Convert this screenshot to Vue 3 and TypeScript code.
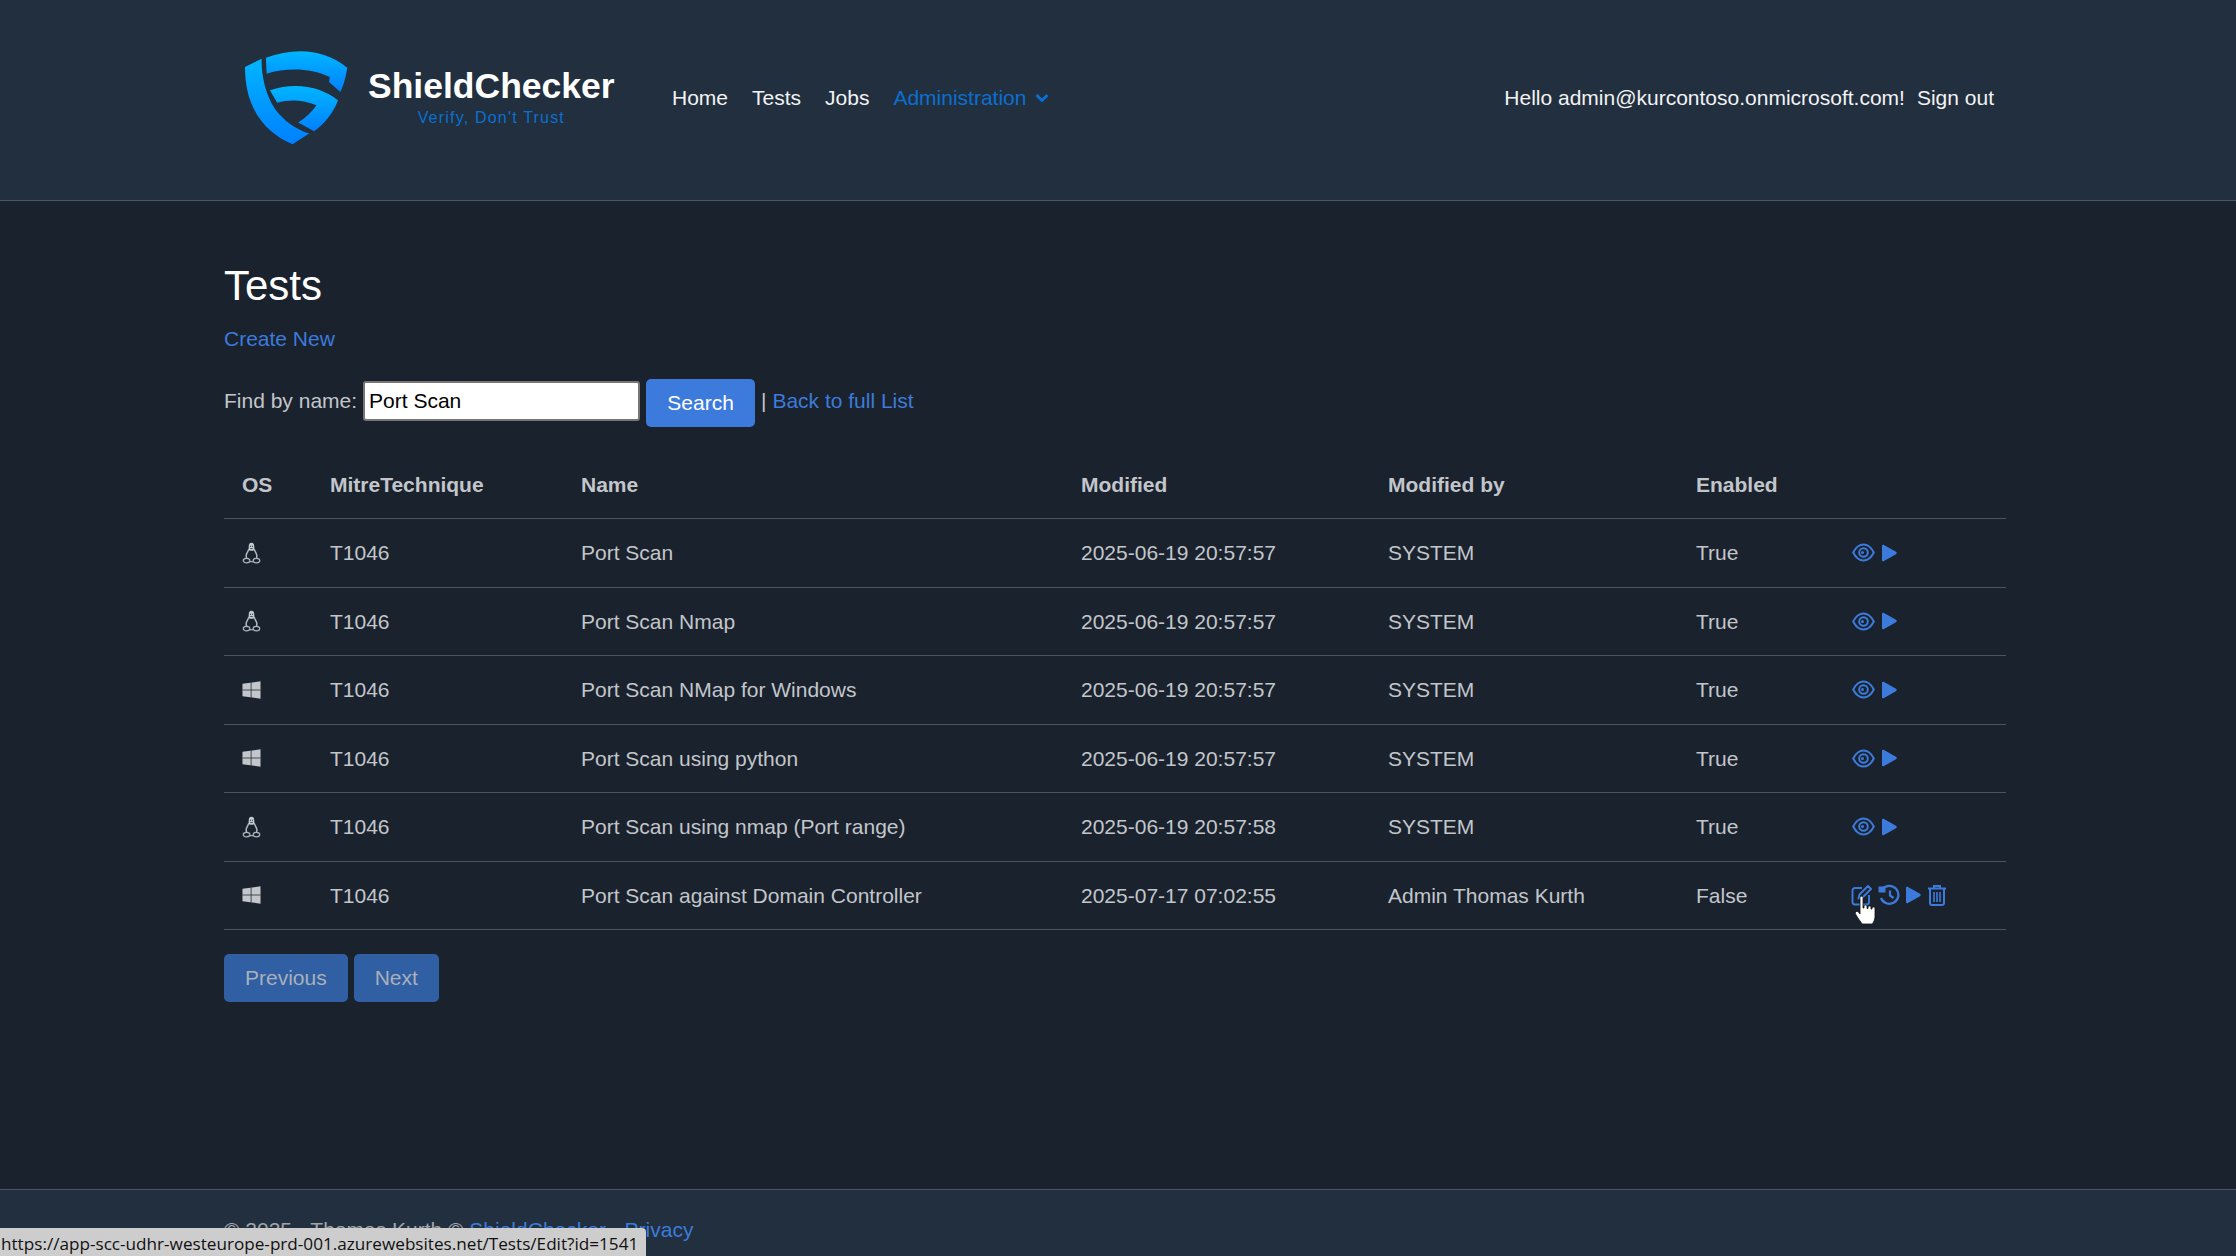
<template>
    <div class="page">
        <header class="topbar">
            <div class="topbar__inner">
                <a class="brand">
                    <svg class="brand__mark" viewBox="60 50 340 300" aria-hidden="true">
                        <defs>
                            <linearGradient id="shieldFill" x1="0" y1="0" x2="0" y2="1">
                                <stop offset="0" stop-color="#00b6ff" />
                                <stop offset="1" stop-color="#0080ff" />
                            </linearGradient>
                        </defs>
                        <g fill="url(#shieldFill)">
                            <path d="M75 110 L125 85 C124 130 135 190 165 235 C190 270 225 295 268 310 L218 342 C140 310 75 240 75 110Z" />
                            <path d="M138 82 C220 52 310 52 383 112 C378 140 372 165 362 185 L328 155 L330 140 C270 112 200 112 140 130Z" />
                            <path d="M150 180 C220 155 300 165 355 210 C340 250 315 280 283 303 L235 277 C258 262 277 245 290 225 C250 207 210 207 172 217Z" />
                        </g>
                    </svg>
                    <span class="brand__text">
                        <span class="brand__name">ShieldChecker</span>
                        <span class="brand__tag">Verify, Don't Trust</span>
                    </span>
                </a>
                <nav class="nav">
                    <a class="nav__link">Home</a>
                    <a class="nav__link">Tests</a>
                    <a class="nav__link">Jobs</a>
                    <a class="nav__link nav__link--active">
                        Administration
                        <svg class="nav__caret" viewBox="0 0 14 10" aria-hidden="true">
                            <path d="M1.500 2 L7 7.500 L12.500 2" fill="none" stroke="currentColor" stroke-width="3" />
                        </svg>
                    </a>
                </nav>
                <div class="nav nav--right">
                    <a class="nav__link nav__link--hello">Hello admin@kurcontoso.onmicrosoft.com!</a>
                    <a class="nav__link">Sign out</a>
                </div>
            </div>
        </header>

        <main class="content">
            <h1 class="title">Tests</h1>
            <p class="create"><a class="link">Create New</a></p>
            <form class="search" @submit.prevent>
                <span class="search__label search__label--find">Find by name:</span>
                <input class="search__input" value="Port Scan" />
                <button class="search__btn">Search</button>
                <span class="search__label">| <a class="link">Back to full List</a></span>
            </form>

            <table class="grid">
                <colgroup>
                    <col v-for="(w, i) in colWidths" :key="i" :style="{ width: w + 'px' }" />
                </colgroup>
                <thead>
                    <tr>
                        <th>OS</th>
                        <th>MitreTechnique</th>
                        <th>Name</th>
                        <th>Modified</th>
                        <th>Modified by</th>
                        <th>Enabled</th>
                        <th></th>
                    </tr>
                </thead>
                <tbody>
                    <tr v-for="row in rows" :key="row.name">
                        <td>
                            <svg v-if="row.os === 'linux'" class="os" viewBox="0 0 20 24" aria-hidden="true">
                                <g fill="none" stroke="#aeb6bd">
                                    <ellipse cx="4.600" cy="20.300" rx="3.600" ry="2.500" stroke-width="1.300" />
                                    <ellipse cx="15.400" cy="20.300" rx="3.600" ry="2.500" stroke-width="1.300" />
                                    <path d="M7 8 C6.400 10.500 4.400 12 4.200 14.500 C4.100 15.800 4.300 17 4.800 18" stroke-width="1.700" />
                                    <path d="M13 8 C13.600 10.500 15.600 12 15.800 14.500 C15.900 15.800 15.700 17 15.200 18" stroke-width="1.700" />
                                    <path d="M8 21.500 H12" stroke-width="1.300" />
                                </g>
                                <path d="M10 .8 C7.800 .8 7 2.600 7 5 C7 6.500 6.800 7.500 6.600 8.400 C8 10 12 10 13.400 8.400 C13.200 7.500 13 6.500 13 5 C13 2.600 12.200 .8 10 .8Z" fill="#c5cbd1" />
                                <path d="M8.400 4 h1.100 v1.300 h-1.100z M10.500 4 h1.100 v1.300 h-1.100z M8.700 6.800 h2.600 v.9 h-2.600z" fill="#1a222d" />
                            </svg>
                            <svg v-else class="os" viewBox="0 0 20 20" aria-hidden="true">
                                <path d="M.5 3.500 L19.500 .8 V19.200 L.5 16.500Z" fill="#c3c7cc" />
                                <path d="M9.600 2 V18 M.5 10 H19.500" fill="none" stroke="#1a222d" stroke-width=".8" />
                            </svg>
                        </td>
                        <td>{{ row.technique }}</td>
                        <td>{{ row.name }}</td>
                        <td>{{ row.modified }}</td>
                        <td>{{ row.by }}</td>
                        <td>{{ row.enabled }}</td>
                        <td>
                            <div class="actions" :class="{ 'actions--full': row.editable }">
                                <template v-if="row.editable">
                                    <svg class="ico ico--edit" viewBox="0 0 22 22" aria-hidden="true">
                                        <path d="M11 4 H4 a2.500 2.500 0 0 0 -2.500 2.500 V18 A2.500 2.500 0 0 0 4 20.500 H15.500 A2.500 2.500 0 0 0 18 18 V11" fill="none" stroke="currentColor" stroke-width="1.900" />
                                        <path d="M7.500 14.500 L8.500 10.500 L17 2 L20 5 L11.500 13.500Z" fill="none" stroke="currentColor" stroke-width="1.900" stroke-linejoin="round" />
                                    </svg>
                                    <svg class="ico ico--history" viewBox="0 0 22 22" aria-hidden="true">
                                        <path d="M4.500 5 A9 9 0 1 1 3 14" fill="none" stroke="currentColor" stroke-width="2.200" />
                                        <path d="M0.500 2.500 L7.500 2.500 L7.500 8.500 L0.500 8.500Z" fill="currentColor" />
                                        <path d="M12 6.500 V11.500 L15.500 14" fill="none" stroke="currentColor" stroke-width="2.200" />
                                    </svg>
                                </template>
                                <svg v-else class="ico ico--eye" viewBox="0 0 23 19" aria-hidden="true">
                                    <path d="M1.200 9.500 C4 4 8 1.500 11.500 1.500 C15 1.500 19 4 21.800 9.500 C19 15 15 17.500 11.500 17.500 C8 17.500 4 15 1.200 9.500Z" fill="none" stroke="currentColor" stroke-width="2" />
                                    <circle cx="11.500" cy="9.500" r="4.300" fill="none" stroke="currentColor" stroke-width="2" />
                                    <circle cx="10.500" cy="9.500" r="1.500" fill="currentColor" />
                                </svg>
                                <svg class="ico ico--play" viewBox="0 0 16 18" aria-hidden="true">
                                    <path d="M1 2 C1 .8 2 .3 3 .9 L15 7.800 C16 8.400 16 9.600 15 10.200 L3 17.100 C2 17.700 1 17.200 1 16Z" fill="currentColor" />
                                </svg>
                                <svg v-if="row.editable" class="ico ico--trash" viewBox="0 0 20 22" aria-hidden="true">
                                    <path d="M1 4.500 H19 M7 4 V2 H13 V4" fill="none" stroke="currentColor" stroke-width="2" />
                                    <path d="M3 5 V19 A2 2 0 0 0 5 21 H15 A2 2 0 0 0 17 19 V5" fill="none" stroke="currentColor" stroke-width="2" />
                                    <path d="M7 8 V18 M10 8 V18 M13 8 V18" fill="none" stroke="currentColor" stroke-width="1.600" />
                                </svg>
                                <svg v-if="row.editable" class="pointer" viewBox="0 0 24 30" aria-hidden="true">
                                    <path d="M6 2.500 C6 .8 9 .8 9 2.500 V13 L10 13 V11 C10 9.600 13 9.600 13 11 V13.500 L14 13.500 V12 C14 10.600 17 10.600 17 12 V14 L18 14 V13 C18 11.600 21 11.600 21 13 V21 C21 25 19 28.500 18 29 H8 C7 27 3 22 1.500 19 C.5 17 3 15.500 4.500 17 L6 19Z" fill="#fff" stroke="#111" stroke-width=".8" />
                                </svg>
                            </div>
                        </td>
                    </tr>
                </tbody>
            </table>

            <div class="pager">
                <button class="pager__btn">Previous</button>
                <button class="pager__btn">Next</button>
            </div>
        </main>

        <footer class="foot">
            <span>© 2025 - Thomas Kurth © <a class="link">ShieldChecker</a> - <a class="link">Privacy</a></span>
        </footer>

        <div class="status">https://app-scc-udhr-westeurope-prd-001.azurewebsites.net/Tests/Edit?id=1541</div>
    </div>
</template>

<script setup lang="ts">
interface TestRow {
    os: 'linux' | 'windows'
    technique: string
    name: string
    modified: string
    by: string
    enabled: string
    editable?: boolean
}

const colWidths = [88, 251, 500, 307, 308, 155, 173]

const rows: TestRow[] = [
    { os: 'linux', technique: 'T1046', name: 'Port Scan', modified: '2025-06-19 20:57:57', by: 'SYSTEM', enabled: 'True' },
    { os: 'linux', technique: 'T1046', name: 'Port Scan Nmap', modified: '2025-06-19 20:57:57', by: 'SYSTEM', enabled: 'True' },
    { os: 'windows', technique: 'T1046', name: 'Port Scan NMap for Windows', modified: '2025-06-19 20:57:57', by: 'SYSTEM', enabled: 'True' },
    { os: 'windows', technique: 'T1046', name: 'Port Scan using python', modified: '2025-06-19 20:57:57', by: 'SYSTEM', enabled: 'True' },
    { os: 'linux', technique: 'T1046', name: 'Port Scan using nmap (Port range)', modified: '2025-06-19 20:57:58', by: 'SYSTEM', enabled: 'True' },
    { os: 'windows', technique: 'T1046', name: 'Port Scan against Domain Controller', modified: '2025-07-17 07:02:55', by: 'Admin Thomas Kurth', enabled: 'False', editable: true }
]
</script>

<style>
html,
body {
    margin: 0;
    overflow: hidden;
    background: #1a222d;
}
</style>

<style scoped>
.page {
    height: 1256px;
    display: flex;
    flex-direction: column;
    position: relative;
    overflow: hidden;
    font-family: "Liberation Sans", Arial, sans-serif;
    font-size: 21px;
    line-height: 31.5px;
    color: #c2c6cb;
    background: #1a222d;
}

.topbar {
    height: 201px;
    flex: none;
    box-sizing: border-box;
    background: #222f3e;
    border-bottom: 1px solid #4a5666;
}

.topbar__inner {
    width: 1782px;
    height: 100%;
    margin-left: 224px;
    display: flex;
    align-items: center;
    padding-bottom: 4px;
    box-sizing: border-box;
}

.brand {
    width: 436px;
    flex: none;
    display: flex;
    align-items: center;
    gap: 15px;
    padding-left: 16px;
    box-sizing: border-box;
}

.brand__mark {
    width: 113px;
    height: 100px;
    flex: none;
    margin-top: -2px;
}

.brand__text {
    display: flex;
    flex-direction: column;
    align-items: center;
    margin-top: -5px;
}

.brand__name {
    font-size: 35.500px;
    line-height: 44px;
    font-weight: 700;
    color: #fff;
}

.brand__tag {
    font-size: 16px;
    line-height: 20px;
    letter-spacing: 1.200px;
    color: #0a6fd0;
}

.nav {
    display: flex;
    align-items: center;
}

.nav--right {
    margin-left: auto;
}

.nav__link {
    padding: 0 12px;
    color: #f2f3f5;
    white-space: nowrap;
}

.nav__link--hello {
    padding-right: 0;
}

.nav__link--active {
    color: #0a6fd0;
}

.nav__caret {
    width: 14px;
    height: 10px;
    margin-left: 3px;
    vertical-align: 2px;
}

.content {
    flex: 1;
    width: 1782px;
    margin-left: 224px;
    padding-top: 57px;
}

.title {
    margin: 0;
    font-size: 42px;
    line-height: 56px;
    font-weight: 400;
    color: #fff;
}

.create {
    margin: 9px 0 0;
}

.link {
    color: #3c7bdc;
}

.search {
    display: flex;
    align-items: center;
    gap: 7px;
    margin-top: 24px;
    height: 48px;
}

.search__label {
    margin-bottom: 4px;
}

.search__label--find {
    margin-right: -1px;
}

.search__input {
    width: 277px;
    height: 40px;
    box-sizing: border-box;
    margin: 0 -1px 4px 0;
    padding: 1px 4px;
    font: inherit;
    color: #000;
    background: #fff;
    border: 2px solid #767676;
    border-radius: 3px;
}

.search__btn {
    width: 109px;
    height: 48px;
    margin-right: -1px;
    padding: 0;
    font: inherit;
    color: #fff;
    background: #3c7bdc;
    border: none;
    border-radius: 5px;
}

.grid {
    width: 1782px;
    margin-top: 27px;
    table-layout: fixed;
    border-collapse: collapse;
}

.grid th,
.grid td {
    padding: 18px;
    text-align: left;
    white-space: nowrap;
    border-bottom: 1px solid #4a5462;
}

.grid th {
    padding: 15px 18px 18px;
    font-weight: 700;
}

.os {
    display: block;
    width: 19px;
    height: 22px;
}

.actions {
    position: relative;
    display: flex;
    align-items: center;
    height: 31.500px;
    color: #3c7bdc;
}

.ico {
    flex: none;
}

.ico--eye {
    width: 23px;
    height: 19px;
    margin: 0 6px 0 1px;
}

.ico--play {
    width: 16px;
    height: 18px;
}

.ico--edit {
    width: 22px;
    height: 22px;
    margin-right: 5px;
}

.ico--history {
    width: 22px;
    height: 22px;
    margin-right: 5px;
}

.actions--full .ico--play {
    margin-right: 6px;
}

.ico--trash {
    width: 20px;
    height: 22px;
}

.pointer {
    position: absolute;
    left: 3px;
    top: 15px;
    width: 24px;
    height: 30px;
}

.pager {
    display: flex;
    gap: 6px;
    margin-top: 24px;
}

.pager__btn {
    height: 48px;
    padding: 0 21px;
    font: inherit;
    color: #a9b0bb;
    background: #305fa3;
    border: none;
    border-radius: 5px;
}

.foot {
    height: 67px;
    flex: none;
    box-sizing: border-box;
    padding: 24px 224px 0;
    color: #a0a5ab;
    background: #222f3e;
    border-top: 1px solid #4a5666;
}

.status {
    position: absolute;
    left: 0;
    bottom: 0;
    width: 646px;
    height: 28px;
    box-sizing: border-box;
    padding: 3px 0 0 1px;
    font-family: "Open Sans", "Noto Sans", sans-serif;
    font-size: 17.150px;
    line-height: 25px;
    white-space: nowrap;
    overflow: hidden;
    color: #111;
    background: #cdcdcd;
    border-top-right-radius: 4px;
}
</style>
